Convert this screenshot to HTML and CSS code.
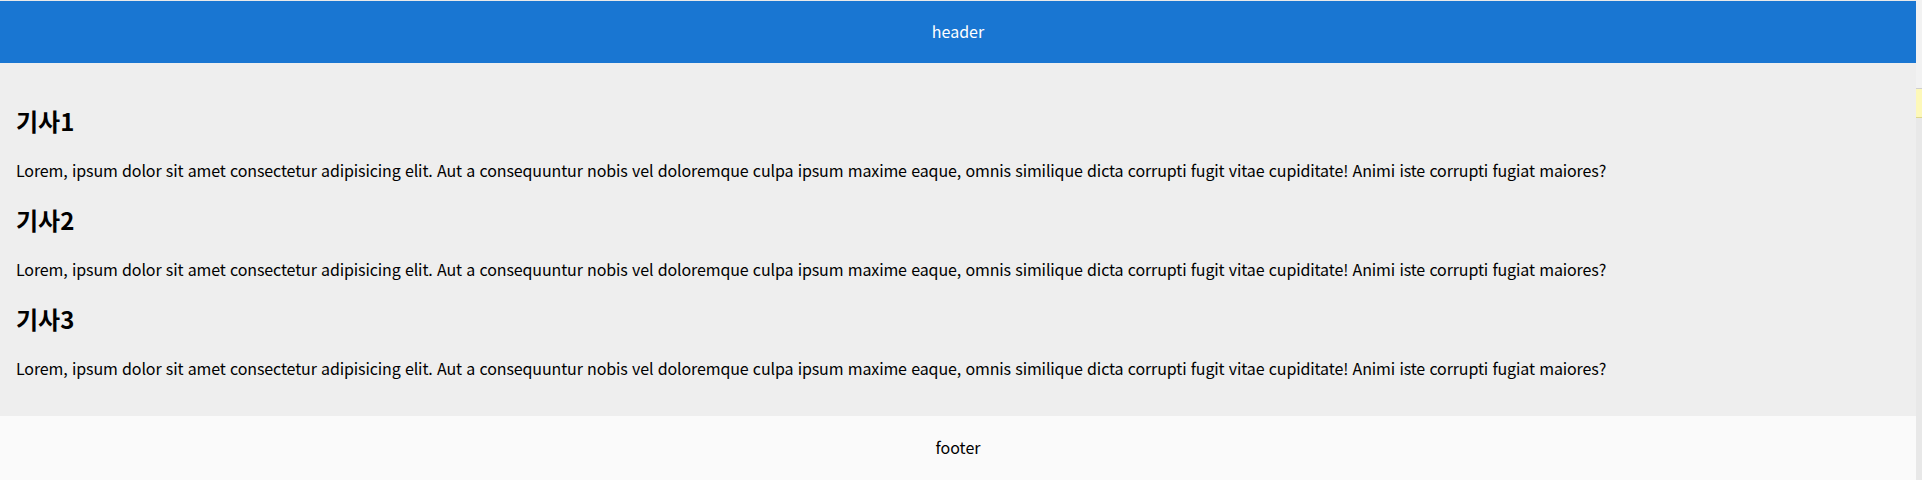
FILE: index.html
```html
<!DOCTYPE html>
<html lang="ko">
<head>
<meta charset="utf-8">
<title>layout</title>
<link rel="stylesheet" href="styles.css">
</head>
<body>
<div class="page">
  <header class="site-header">header</header>
  <main class="site-main">
    <article class="post">
      <h2 class="post-title">기사1</h2>
      <p class="post-text">Lorem, ipsum dolor sit amet consectetur adipisicing elit. Aut a consequuntur nobis vel doloremque culpa ipsum maxime eaque, omnis similique dicta corrupti fugit vitae cupiditate! Animi iste corrupti fugiat maiores?</p>
    </article>
    <article class="post">
      <h2 class="post-title">기사2</h2>
      <p class="post-text">Lorem, ipsum dolor sit amet consectetur adipisicing elit. Aut a consequuntur nobis vel doloremque culpa ipsum maxime eaque, omnis similique dicta corrupti fugit vitae cupiditate! Animi iste corrupti fugiat maiores?</p>
    </article>
    <article class="post">
      <h2 class="post-title">기사3</h2>
      <p class="post-text">Lorem, ipsum dolor sit amet consectetur adipisicing elit. Aut a consequuntur nobis vel doloremque culpa ipsum maxime eaque, omnis similique dicta corrupti fugit vitae cupiditate! Animi iste corrupti fugiat maiores?</p>
    </article>
  </main>
  <footer class="site-footer">footer</footer>
</div>
<div class="rail">
  <div class="rail-top"></div>
  <div class="rail-mark"></div>
  <div class="rail-rest"></div>
</div>
</body>
</html>
```
FILE: styles.css
```css
html, body {
  margin: 0;
  padding: 0;
}
body {
  display: grid;
  grid-template-columns: 1fr 6px;
  min-height: 480px;
  background: #fafafa;
  font-family: "Noto Sans CJK KR", "Noto Sans", sans-serif;
  font-size: 16px;
  color: #000;
}
.page {
  display: flex;
  flex-direction: column;
  border-top: 1px solid #e9e9e9;
}
.site-header {
  background: #1976d2;
  color: #fff;
  text-align: center;
  padding: 19px 0 20px;
  line-height: 23px;
}
.site-main {
  background: #eeeeee;
  padding: 20px 16px;
}
.post-title {
  font-size: 24px;
  font-weight: 700;
  margin: 20px 0;
}
.post-text {
  margin: 16px 0;
  letter-spacing: -0.125px;
}
.site-footer {
  background: #fafafa;
  text-align: center;
  padding: 20px 0;
  line-height: 23px;
}
.rail {
  display: flex;
  flex-direction: column;
}
.rail-top {
  height: 88px;
  background: #f2f2f2;
}
.rail-mark {
  height: 28px;
  background: #fdf8b9;
  border-top: 1px solid #cfcfcf;
  border-bottom: 1px solid #ddd68c;
}
.rail-rest {
  flex: 1;
  background: #e8e8e8;
}
```
